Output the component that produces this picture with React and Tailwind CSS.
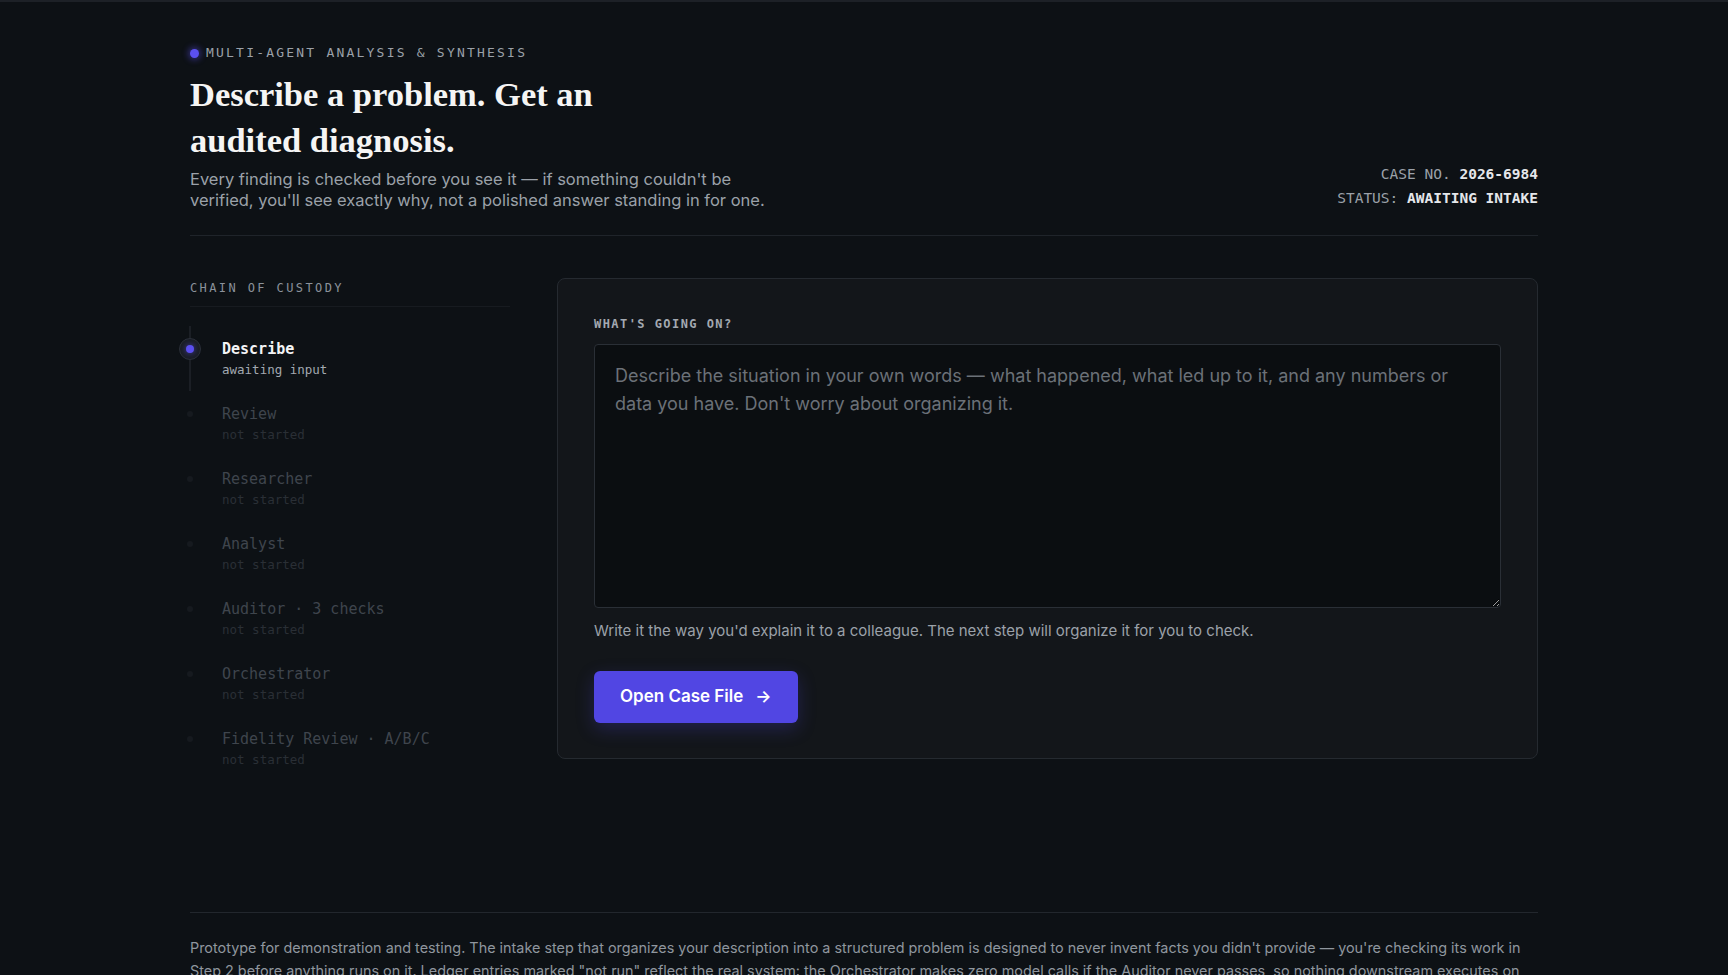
import { useState } from "react";

const MONO = "font-['DejaVu_Sans_Mono',monospace]";

const steps = [
  { name: "Describe", note: "awaiting input", active: true },
  { name: "Review", note: "not started" },
  { name: "Researcher", note: "not started" },
  { name: "Analyst", note: "not started" },
  { name: "Auditor · 3 checks", note: "not started" },
  { name: "Orchestrator", note: "not started" },
  { name: "Fidelity Review · A/B/C", note: "not started" },
];

// Left rail: each stage of the pipeline with its current state
function Custody() {
  return (
    <div className="w-[320px] pt-[2px]">
      <div
        className={`${MONO} text-[12px] leading-4 tracking-[0.2em] text-[#8b929b] pb-[10px] border-b border-[#171b20]`}
      >
        CHAIN OF CUSTODY
      </div>
      <ul className="mt-8 flex flex-col gap-[26px]">
        {steps.map((s) => (
          <li key={s.name} className="flex gap-5">
            <div className="relative -ml-3 w-6 shrink-0 h-5 flex items-center justify-center">
              {s.active ? (
                <>
                  <span className="absolute left-1/2 -translate-x-1/2 top-[-13px] h-[65px] w-px bg-[#2a2f36]" />
                  <span className="relative w-[22px] h-[22px] rounded-full bg-[#191d23] border border-[#2b3038] flex items-center justify-center">
                    <span className="w-2 h-2 rounded-full bg-[#5b4ff0] shadow-[0_0_6px_rgba(91,79,240,0.7)]" />
                  </span>
                </>
              ) : (
                <span className="w-[6px] h-[6px] rounded-full bg-[#161a1f]" />
              )}
            </div>
            <div className={MONO}>
              <div
                className={`text-[15px] leading-5 ${
                  s.active ? "text-[#f3f4f6] font-semibold" : "text-[#3f454d]"
                }`}
              >
                {s.name}
              </div>
              <div
                className={`mt-[3px] text-[12.5px] leading-4 ${
                  s.active ? "text-[#a3a9b1]" : "text-[#2a2f35]"
                }`}
              >
                {s.note}
              </div>
            </div>
          </li>
        ))}
      </ul>
    </div>
  );
}

function IntakeCard() {
  const [text, setText] = useState("");

  return (
    <div className="flex-1 rounded-lg border border-[#252a30] bg-[#13161a] px-9 pt-[37px] pb-[35px]">
      <label
        className={`${MONO} block text-[12px] leading-4 font-bold tracking-[0.12em] text-[#a3a9b1]`}
      >
        WHAT'S GOING ON?
      </label>
      <textarea
        value={text}
        onChange={(e) => setText(e.target.value)}
        placeholder="Describe the situation in your own words — what happened, what led up to it, and any numbers or data you have. Don't worry about organizing it."
        className="mt-3 block w-full h-[264px] resize-y rounded-[4px] border border-[#2a2f36] bg-[#0b0e11] px-5 py-[17px] text-[18px] leading-[28px] text-[#e5e7eb] placeholder:text-[#6b7178] focus:outline-none"
      />
      <p className="mt-[13px] text-[15px] leading-5 text-[#9ba1a9]">
        Write it the way you'd explain it to a colleague. The next step will organize it for you to check.
      </p>
      <button className="mt-[30px] flex items-center gap-3 h-[52px] px-[26px] rounded-md bg-[#5146e3] text-white text-[17px] font-semibold shadow-[0_6px_18px_rgba(79,70,229,0.25)]">
        Open Case File
        <span className="text-[17px]">→</span>
      </button>
    </div>
  );
}

export default function App() {
  return (
    <div className="min-h-screen bg-[#0d1115] border-t-2 border-[#1d2127] font-['Inter',sans-serif]">
      <div className="max-w-[1348px] mx-auto pt-[43px]">
        {/* Header */}
        <header className="flex items-end justify-between pb-[24px] border-b border-[#1f242a]">
          <div>
            <div className="flex items-center gap-[7px]">
              <span className="w-[9px] h-[9px] rounded-full bg-[#5b50f0] shadow-[0_0_6px_2px_rgba(91,80,240,0.45)]" />
              <span
                className={`${MONO} text-[13px] leading-4 tracking-[0.17em] text-[#9ba1a9]`}
              >
                MULTI-AGENT ANALYSIS &amp; SYNTHESIS
              </span>
            </div>
            <h1 className="mt-[10px] font-['Liberation_Serif',serif] font-bold text-[34.5px] leading-[46px] text-[#f5f5f4] w-[460px]">
              Describe a problem. Get an audited diagnosis.
            </h1>
            <p className="mt-[6px] text-[16.5px] leading-[21px] text-[#9ba1a9] w-[590px]">
              Every finding is checked before you see it — if something couldn't be verified, you'll see exactly why, not a polished answer standing in for one.
            </p>
          </div>
          <div className={`${MONO} text-right text-[14.5px] leading-6 mb-[1px]`}>
            <div className="text-[#9ba1a9]">
              CASE NO. <span className="text-[#e5e7eb] font-semibold">2026-6984</span>
            </div>
            <div className="text-[#9ba1a9]">
              STATUS: <span className="text-[#e5e7eb] font-semibold">AWAITING INTAKE</span>
            </div>
          </div>
        </header>

        {/* Pipeline + intake */}
        <main className="mt-[42px] flex gap-[47px] items-start">
          <Custody />
          <IntakeCard />
        </main>

        <footer className="mt-[144px] border-t border-[#22272d] pt-[23px]">
          <p className="text-[14.4px] leading-[23px] text-[#8f969e]">
            Prototype for demonstration and testing. The intake step that organizes your description into a structured problem is designed to never invent facts you didn't provide — you're checking its work in Step 2 before anything runs on it. Ledger entries marked "not run" reflect the real system: the Orchestrator makes zero model calls if the Auditor never passes, so nothing downstream executes on unverified findings.
          </p>
        </footer>
      </div>
    </div>
  );
}
